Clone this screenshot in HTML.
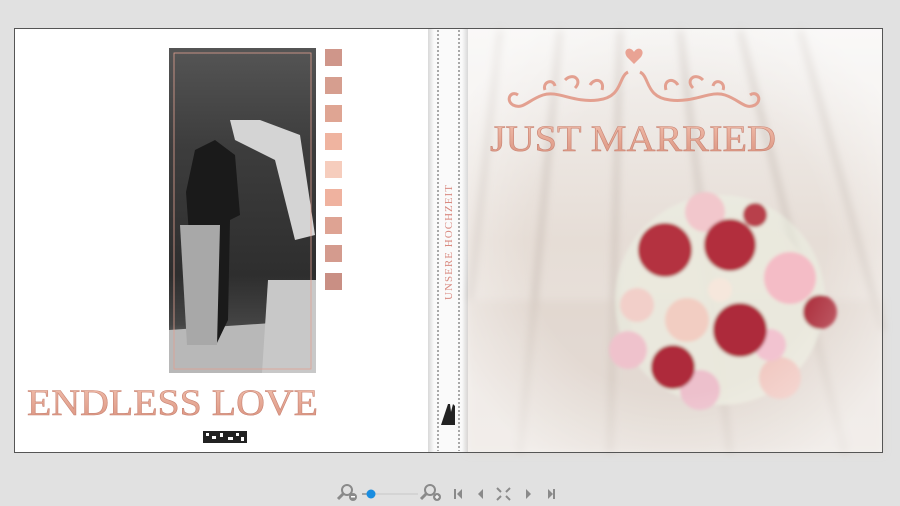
<!DOCTYPE html>
<html><head><meta charset="utf-8"><style>
html,body{margin:0;padding:0;width:900px;height:506px;background:#e1e1e1;overflow:hidden;font-family:"Liberation Serif",serif}
</style></head><body>
<svg width="900" height="506" viewBox="0 0 900 506" xmlns="http://www.w3.org/2000/svg" style="position:absolute;left:0;top:0">
<defs>
<linearGradient id="wood" x1="0" y1="0" x2="0" y2="1">
<stop offset="0" stop-color="#f4f2f0"/><stop offset="0.5" stop-color="#e6ddd6"/><stop offset="1" stop-color="#ebe5e0"/>
</linearGradient>
<linearGradient id="spine" x1="0" y1="0" x2="1" y2="0">
<stop offset="0" stop-color="#d8d8d8"/><stop offset="0.15" stop-color="#fafafa"/><stop offset="0.85" stop-color="#fafafa"/><stop offset="1" stop-color="#d8d8d8"/>
</linearGradient>
<linearGradient id="photo" x1="0" y1="0" x2="0" y2="1">
<stop offset="0" stop-color="#555"/><stop offset="0.3" stop-color="#3d3d3d"/><stop offset="0.7" stop-color="#2e2e2e"/><stop offset="0.85" stop-color="#444"/><stop offset="1" stop-color="#aaa"/>
</linearGradient>
<linearGradient id="txt" x1="0" y1="0" x2="0" y2="1"><stop offset="0" stop-color="#f2c0ae"/><stop offset="1" stop-color="#d9907c"/></linearGradient>
<radialGradient id="fade" cx="0.5" cy="0.5" r="0.6"><stop offset="0.6" stop-color="#fff" stop-opacity="0"/><stop offset="1" stop-color="#fff" stop-opacity="0.5"/></radialGradient>
<filter id="bl"><feGaussianBlur stdDeviation="4"/></filter>
<filter id="bl2"><feGaussianBlur stdDeviation="1.5"/></filter>
</defs>
<rect x="14" y="28" width="416" height="425" fill="#fff"/>
<rect x="428" y="28" width="40" height="425" fill="url(#spine)"/>
<line x1="438" y1="30" x2="438" y2="451" stroke="#555" stroke-dasharray="2,2" stroke-width="1"/>
<line x1="459" y1="30" x2="459" y2="451" stroke="#555" stroke-dasharray="2,2" stroke-width="1"/>
<text transform="translate(452,300) rotate(-90)" font-size="11" fill="#d98a80" textLength="115" font-family="Liberation Serif,serif">UNSERE HOCHZEIT</text>
<path d="M441 425 L446 410 L448 404 L450 404 L451 412 L453 404 L455 406 L455 425 Z" fill="#222"/>
<rect x="468" y="28" width="415" height="425" fill="url(#wood)"/>
<g filter="url(#bl)">
<g stroke="#b8aca3" stroke-width="4" opacity="0.6" fill="none">
<path d="M560 30 L520 453"/><path d="M620 30 L610 453"/><path d="M680 30 L730 453"/><path d="M740 30 L845 453"/><path d="M800 30 L883 330"/><path d="M500 30 L470 300"/>
</g>
<path d="M468 300 L883 300 L883 453 L468 453Z" fill="#d9cdc3" opacity="0.4"/>
</g>
<g filter="url(#bl2)">
<circle cx="725" cy="310" r="95" fill="#e9e0d6" opacity="0.8"/>
<circle cx="720" cy="300" r="105" fill="#eef3e6" opacity="0.5"/>
<circle cx="705" cy="212" r="20" fill="#f2c7cc"/>
<circle cx="790" cy="278" r="26" fill="#f4bcc6"/>
<circle cx="637" cy="305" r="17" fill="#f2cfc9"/>
<circle cx="628" cy="350" r="19" fill="#efc2cc"/>
<circle cx="687" cy="320" r="22" fill="#f2cdc2"/>
<circle cx="780" cy="378" r="21" fill="#f1c9c2"/>
<circle cx="700" cy="390" r="20" fill="#edc0cc"/>
<circle cx="770" cy="345" r="16" fill="#f2c3d0"/>
<circle cx="720" cy="290" r="12" fill="#f6e7dc"/>
<circle cx="665" cy="250" r="27" fill="#b4303f"/>
<circle cx="730" cy="245" r="26" fill="#b22f3d"/>
<circle cx="740" cy="330" r="27" fill="#ad2a3a"/>
<circle cx="673" cy="367" r="22" fill="#ae2b3b"/>
<circle cx="820" cy="312" r="17" fill="#b03745"/>
<circle cx="755" cy="215" r="12" fill="#b8404c"/>
</g>
<rect x="468" y="28" width="415" height="425" fill="url(#fade)"/>
<path d="M634 52 c-4 -7 -12 -2 -7 5 l7 7 l7 -7 c5 -7 -3 -12 -7 -5z" fill="#e9a394"/>
<g fill="none" stroke="#e3a090" stroke-width="3">
<path d="M628 72 c-10 5 -5 25 -30 28 c-25 3 -40 -10 -55 -5 c-15 5 -20 15 -30 10 c-8 -5 -2 -15 5 -10"/>
<path d="M640 72 c10 5 5 25 30 28 c25 3 40 -10 55 -5 c15 5 20 15 30 10 c8 -5 2 -15 -5 -10"/>
<path d="M565 80 c8 -8 18 0 10 8"/><path d="M703 80 c-8 -8 -18 0 -10 8"/>
<path d="M590 85 c5 -8 15 -5 12 5"/><path d="M678 85 c-5 -8 -15 -5 -12 5"/>
<path d="M545 90 c-3 -8 8 -12 10 -4"/><path d="M723 90 c3 -8 -8 -12 -10 -4"/>
</g>
<text x="490" y="151" font-size="37" textLength="286" lengthAdjust="spacingAndGlyphs" fill="url(#txt)" stroke="#c98575" stroke-width="0.6" font-family="Liberation Serif,serif">JUST MARRIED</text>
<rect x="169" y="48" width="147" height="325" fill="url(#photo)"/>
<path d="M169 330 L316 320 L316 373 L169 373 Z" fill="#b8b8b8"/>
<path d="M268 280 L316 280 L316 373 L262 373 Z" fill="#c8c8c8"/>
<path d="M195 150 l20 -10 l20 15 l5 60 l-10 5 l-2 100 l-12 25 l-20 -3 l-5 -80 l-5 -70 z" fill="#1a1a1a"/>
<path d="M180 225 l40 0 l-3 120 l-30 0 z" fill="#a8a8a8"/>
<path d="M230 120 l30 0 l40 15 l15 100 l-20 5 l-20 -80 l-40 -20 z" fill="#d4d4d4"/>
<rect x="174" y="53" width="137" height="316" fill="none" stroke="#e0a090" stroke-width="0.8"/>
<g>
<rect x="325" y="49" width="17" height="17" fill="#cf968a"/>
<rect x="325" y="77" width="17" height="17" fill="#d69e8f"/>
<rect x="325" y="105" width="17" height="17" fill="#dfa593"/>
<rect x="325" y="133" width="17" height="17" fill="#efb4a0"/>
<rect x="325" y="161" width="17" height="17" fill="#f6cdbd"/>
<rect x="325" y="189" width="17" height="17" fill="#efb29f"/>
<rect x="325" y="217" width="17" height="17" fill="#dea393"/>
<rect x="325" y="245" width="17" height="17" fill="#d49b8e"/>
<rect x="325" y="273" width="17" height="17" fill="#c98f84"/>
</g>
<text x="27" y="415" font-size="37" textLength="291" lengthAdjust="spacingAndGlyphs" fill="url(#txt)" stroke="#c98575" stroke-width="0.6" font-family="Liberation Serif,serif">ENDLESS LOVE</text>
<rect x="203" y="431" width="44" height="12" fill="#222"/>
<g fill="#fff"><rect x="206" y="433" width="3" height="3"/><rect x="212" y="436" width="4" height="3"/><rect x="220" y="433" width="3" height="4"/><rect x="228" y="437" width="5" height="3"/><rect x="236" y="433" width="3" height="3"/><rect x="241" y="437" width="3" height="4"/></g>
<rect x="14.5" y="28.5" width="868" height="424" fill="none" stroke="#555" stroke-width="1"/>
<g fill="#8a8a8a">
<circle cx="347" cy="490" r="5" fill="none" stroke="#8a8a8a" stroke-width="2"/><path d="M343 494 l-5 5" stroke="#8a8a8a" stroke-width="3"/><circle cx="353" cy="497" r="4"/><rect x="351" y="496" width="4" height="1.5" fill="#fff"/>
<line x1="362" y1="494" x2="418" y2="494" stroke="#c8c8c8" stroke-width="1"/><line x1="362" y1="494" x2="368" y2="494" stroke="#666" stroke-width="1"/>
<circle cx="371" cy="494" r="4.5" fill="#1a8de0"/>
<circle cx="430" cy="490" r="5" fill="none" stroke="#8a8a8a" stroke-width="2"/><path d="M426 494 l-5 5" stroke="#8a8a8a" stroke-width="3"/><circle cx="437" cy="497" r="4"/><path d="M435 497h4M437 495v4" stroke="#fff" stroke-width="1.3"/>
<rect x="454" y="489" width="2" height="10"/><path d="M462 489 v10 l-5 -5z"/>
<path d="M483 489 v10 l-5 -5z"/>
<path d="M497 488 l4 4 M510 488 l-4 4 M497 500 l4 -4 M510 500 l-4 -4" stroke="#8a8a8a" stroke-width="2"/>
<path d="M526 489 v10 l5 -5z"/>
<path d="M548 489 v10 l5 -5z"/><rect x="553" y="489" width="2" height="10"/>
</g>
</svg>
</body></html>
